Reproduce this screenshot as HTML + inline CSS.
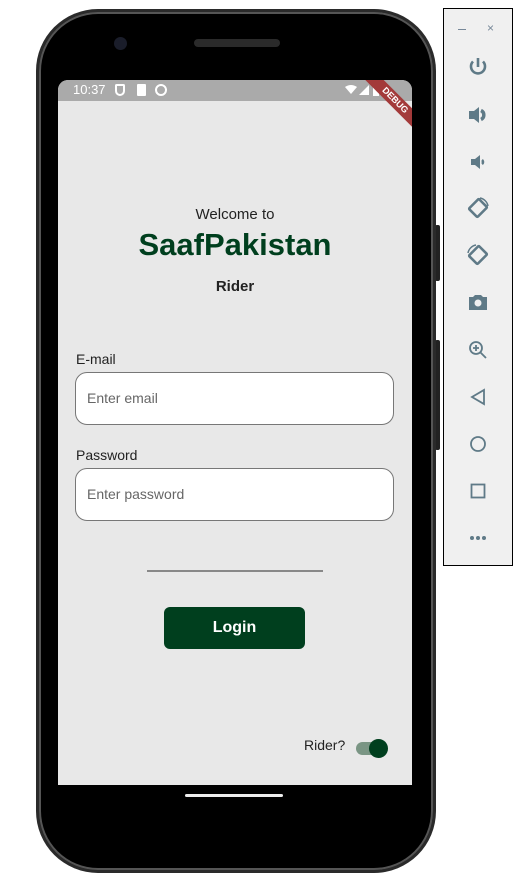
<!DOCTYPE html>
<html><head><style>
body{margin:0;width:517px;height:886px;background:#fff;position:relative;overflow:hidden;font-family:"Liberation Sans",Roboto,sans-serif}
.a{position:absolute}
.t{position:absolute;left:58px;width:354px;text-align:center}
.inp{position:absolute;left:75px;width:319px;height:53px;background:#fff;border:1px solid #777;border-radius:12px;box-sizing:border-box}
.ph{position:absolute;left:11px;top:17px;font-size:14px;color:#666}
.lbl{position:absolute;left:76px;font-size:14px;color:#222}
.ic{position:absolute;left:466px;width:24px;height:24px}
</style></head><body>
<div class="a" style="left:435px;top:225px;width:5px;height:56px;background:#222;border-radius:2px"></div>
<div class="a" style="left:435px;top:340px;width:5px;height:110px;background:#222;border-radius:2px"></div>
<div class="a" style="left:36px;top:9px;width:400px;height:864px;background:#2a2a2a;border-radius:62px"></div>
<div class="a" style="left:39px;top:12px;width:394px;height:858px;background:#000;border-radius:59px;box-shadow:inset 0 0 0 2px #555"></div>
<div class="a" style="left:114px;top:37px;width:13px;height:13px;background:#1a1d2a;border-radius:50%"></div>
<div class="a" style="left:194px;top:39px;width:86px;height:8px;background:#2a2a2a;border-radius:4px"></div>
<div class="a" style="left:58px;top:80px;width:354px;height:705px;background:#e8e8e8;border-radius:10px 10px 0 0;overflow:hidden">
 <div class="a" style="left:0;top:0;width:354px;height:21px;background:#aaa"></div>
 <div class="a" style="left:15px;top:2px;font-size:13px;color:#fff">10:37</div>
 <div class="a" style="left:57px;top:4px;width:10px;height:12px;border:2px solid #fff;border-radius:2px 2px 6px 6px;box-sizing:border-box"></div>
 <div class="a" style="left:79px;top:4px;width:9px;height:12px;background:#fff;border-radius:1px"></div>
 <div class="a" style="left:97px;top:4px;width:12px;height:12px;border:2px solid #fff;border-radius:50%;box-sizing:border-box"></div>
 <svg class="a" style="left:287px;top:4px" width="40" height="13"><path d="M0 3 Q6 -1 12 3 L6 10Z" fill="#fff"/><path d="M14 11 L24 1 L24 11Z" fill="#fff"/><rect x="28" y="1" width="6" height="11" fill="#fff"/></svg>
 <div class="a" style="left:292px;top:14px;width:90px;height:13px;background:#a33a3a;transform:rotate(45deg);color:#fff;font-size:9px;font-weight:bold;text-align:center;line-height:13px">DEBUG</div>
</div>
<div class="t" style="top:206px;font-size:15px;color:#222">Welcome to</div>
<div class="t" style="top:227px;font-size:31px;font-weight:bold;color:#003f1e">SaafPakistan</div>
<div class="t" style="top:278px;font-size:15px;font-weight:bold;color:#222">Rider</div>
<div class="lbl" style="top:351px">E-mail</div>
<div class="inp" style="top:372px"><div class="ph">Enter email</div></div>
<div class="lbl" style="top:447px">Password</div>
<div class="inp" style="top:468px"><div class="ph">Enter password</div></div>
<div class="a" style="left:147px;top:570px;width:176px;height:2px;background:#888"></div>
<div class="a" style="left:164px;top:607px;width:141px;height:42px;background:#003f1e;border-radius:6px;color:#fff;font-weight:bold;font-size:16px;text-align:center;line-height:42px">Login</div>
<div class="a" style="left:304px;top:737px;font-size:14px;color:#222">Rider?</div>
<div class="a" style="left:356px;top:742px;width:30px;height:13px;background:#7a9584;border-radius:7px"></div>
<div class="a" style="left:369px;top:739px;width:19px;height:19px;background:#003f1e;border-radius:50%"></div>
<div class="a" style="left:185px;top:794px;width:98px;height:3px;background:#eee;border-radius:2px"></div>
<div class="a" style="left:443px;top:8px;width:70px;height:558px;background:#f0f0f0;border:1px solid #000;box-sizing:border-box"></div>
<div class="a" style="left:458px;top:29px;width:8px;height:1px;background:#789"></div>
<div class="a" style="left:487px;top:21px;font-size:12px;color:#789">×</div>
<svg class="ic" style="top:55px" viewBox="0 0 24 24"><path d="M12 3v9M7 6.5a7 7 0 1 0 10 0" stroke="#5f7a87" stroke-width="2.6" fill="none"/></svg>
<svg class="ic" style="top:103px" viewBox="0 0 24 24"><path d="M3 8h5l5-4v16l-5-4H3z" fill="#5f7a87"/><path d="M15 7.5a5 5 0 0 1 0 9" stroke="#5f7a87" stroke-width="3.5" fill="none"/></svg>
<svg class="ic" style="top:150px" viewBox="0 0 24 24"><path d="M5 9h4l5-4v14l-5-4H5z" fill="#5f7a87"/><path d="M16 10a2.5 2.5 0 0 1 0 4" stroke="#5f7a87" stroke-width="2.5" fill="none"/></svg>
<svg class="ic" style="top:196px" viewBox="0 0 24 24"><rect x="5" y="6" width="14" height="12" rx="1" transform="rotate(-45 12 12)" stroke="#5f7a87" stroke-width="2.6" fill="none"/><path d="M14 2a10 10 0 0 1 8 8" stroke="#5f7a87" stroke-width="1.5" fill="none"/></svg>
<svg class="ic" style="top:243px" viewBox="0 0 24 24"><rect x="5" y="6" width="14" height="12" rx="1" transform="rotate(-45 12 12)" stroke="#5f7a87" stroke-width="2.6" fill="none"/><path d="M2 10a10 10 0 0 1 8 -8" stroke="#5f7a87" stroke-width="1.5" fill="none"/></svg>
<svg class="ic" style="top:290px" viewBox="0 0 24 24"><path d="M3 7h4l2-2h6l2 2h4v13H3z" fill="#5f7a87"/><circle cx="12" cy="13" r="3.5" fill="#f0f0f0"/></svg>
<svg class="ic" style="top:338px" viewBox="0 0 24 24"><circle cx="10" cy="10" r="6" stroke="#5f7a87" stroke-width="1.8" fill="none"/><path d="M14.5 14.5L20 20M10 7v6M7 10h6" stroke="#5f7a87" stroke-width="1.8"/></svg>
<svg class="ic" style="top:385px" viewBox="0 0 24 24"><path d="M18 5v14L6 12z" stroke="#5f7a87" stroke-width="1.8" fill="none"/></svg>
<svg class="ic" style="top:432px" viewBox="0 0 24 24"><circle cx="12" cy="12" r="7" stroke="#5f7a87" stroke-width="1.8" fill="none"/></svg>
<svg class="ic" style="top:479px" viewBox="0 0 24 24"><rect x="5.5" y="5.5" width="13" height="13" stroke="#5f7a87" stroke-width="1.8" fill="none"/></svg>
<svg class="ic" style="top:526px" viewBox="0 0 24 24"><circle cx="6" cy="12" r="2" fill="#5f7a87"/><circle cx="12" cy="12" r="2" fill="#5f7a87"/><circle cx="18" cy="12" r="2" fill="#5f7a87"/></svg>
</body></html>
